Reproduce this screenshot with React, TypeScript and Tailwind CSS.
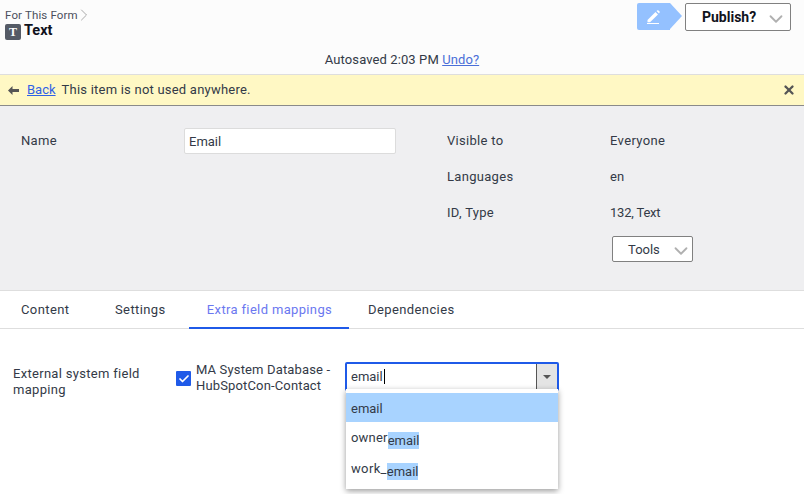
import { Check, ChevronDown, ChevronRight, X } from 'lucide-react'

const FONT = "font-['Roboto',sans-serif]"

function Meta({ label, value, valueClass }: { label: string; value: string; valueClass?: string }) {
  return (
    <div className="flex h-9 items-start">
      <div className="w-[163px] tracking-[0.3px]">{label}</div>
      <div className={valueClass}>{value}</div>
    </div>
  )
}

export default function App() {
  return (
    <div className={`${FONT} h-[494px] w-[804px] overflow-hidden bg-white text-[13px] text-[#333a47]`}>
      {/* Header */}
      <header className="h-[75px] border-b border-[#dedede] bg-[#fcfcfc]">
        <div className="flex h-[52px] justify-between">
          <div className="pl-[5px] pt-[8px]">
            <div className="flex h-[14px] items-center text-[11.5px] leading-[14px] tracking-[0.15px] text-[#4a4f5c]">
              For This Form
              <ChevronRight className="ml-[-4px] text-[#999]" size={20} strokeWidth={1} />
            </div>
            <div className="flex items-start">
              <span className="mr-[3px] mt-[2px] flex h-[16px] w-[16px] items-center justify-center rounded-[2px] bg-[#555b66] font-['Liberation_Serif',serif] text-[12px] font-bold leading-none text-white">
                T
              </span>
              <span className="mt-[1px] text-[14.5px] font-bold leading-[16px] text-[#10131c]">Text</span>
            </div>
          </div>
          <div className="flex items-start pr-[13px] pt-[3px]">
            <div className="relative mr-[3px] flex h-[27px] w-[33px] items-center justify-center rounded-l-[2px] bg-[#94c1ff]">
              <svg width="14" height="14" viewBox="0 0 14 14" className="ml-[1px]">
                <path d="M0.5 10 L8.5 2 L11 4.5 L3 12.2 L0.5 12.2 Z M9.5 1 L10.5 0.3 Q11 0 11.5 0.4 L12.6 1.6 Q13 2 12.6 2.5 L12 3.5 Z" fill="white" />
                <rect x="0" y="13" width="12" height="1" fill="white" />
              </svg>
              <span className="absolute left-[33px] top-0 h-0 w-0 border-y-[13.5px] border-l-[12px] border-y-transparent border-l-[#94c1ff]" />
            </div>
            <button className="relative ml-[12px] flex h-[28px] w-[106px] items-center rounded-[2px] border border-[#808080] bg-white pl-[16px] text-[14px] font-bold text-[#10131c]">
              Publish?
              <ChevronDown className="absolute right-[3px] top-[4px] text-[#b0b0b0]" size={22} strokeWidth={2} />
            </button>
          </div>
        </div>
        <div className="text-center text-[13px] leading-[16px] tracking-[0.1px]">
          Autosaved 2:03 PM <a className="text-[#4a6fd8] underline">Undo?</a>
        </div>
      </header>

      {/* Notice */}
      <div className="flex h-[31px] items-center justify-between border-b border-[#8a8a8a] bg-[#fff8c4] pl-[8px] pr-[8px]">
        <div className="flex items-center">
          <svg width="11" height="9" viewBox="0 0 11 9" className="mr-[8px] text-[#555]">
            <path d="M0 4.5 L4.5 0 L4.5 3 L11 3 L11 6 L4.5 6 L4.5 9 Z" fill="currentColor" />
          </svg>
          <a className="mr-[6px] text-[#2f62e6] underline">Back</a>
          <span className="tracking-[0.22px]">This item is not used anywhere.</span>
        </div>
        <X className="text-[#555]" size={14} strokeWidth={4} />
      </div>

      {/* Details panel */}
      <section className="flex h-[185px] border-b border-[#dedede] bg-[#efeff1] pt-[22px]">
        <div className="flex w-[447px] items-start pl-[21px]">
          <div className="w-[163px] pt-[5px] leading-[16px] tracking-[0.3px]">Name</div>
          <input
            readOnly
            value="Email"
            className="h-[26px] w-[212px] rounded-[2px] border border-[#dcdcdc] bg-white px-[4px] text-[13px] text-[#333a47] outline-none"
          />
        </div>
        <div className="flex flex-col pt-[5px] leading-[16px]">
          <Meta label="Visible to" value="Everyone" valueClass="tracking-[0.35px]" />
          <Meta label="Languages" value="en" />
          <Meta label="ID, Type" value="132, Text" valueClass="tracking-[-0.2px]" />
          <button className="relative ml-[165px] mt-[-5px] flex h-[26px] w-[81px] items-center rounded-[2px] border border-[#808080] bg-white pl-[15px] pt-[1px] text-[13px]">
            Tools
            <ChevronDown className="absolute right-[0px] top-[3px] text-[#b0b0b0]" size={22} strokeWidth={2} />
          </button>
        </div>
      </section>

      {/* Tabs */}
      <nav className="flex h-[38px] border-b border-[#dedede] text-[13px] tracking-[0.4px]">
        <div className="flex w-[94px] items-center pl-[21px]">Content</div>
        <div className="flex w-[95px] items-center pl-[21px]">Settings</div>
        <div className="flex h-[38px] w-[160px] items-center justify-center border-b-2 border-[#1f5ae8] pl-[1px] pt-[2px] tracking-[0.35px] text-[#6b78f0]">
          Extra field mappings
        </div>
        <div className="flex items-center pl-[19px]">Dependencies</div>
      </nav>

      {/* Mapping row */}
      <div className="flex items-start pl-[13px] pt-[33px]">
        <div className="w-[163px] pt-[4px] leading-[16px] tracking-[0.3px]">
          External system field
          <br />
          mapping
        </div>
        <span className="mr-[5px] mt-[9px] flex h-[15px] w-[15px] items-center justify-center rounded-[1px] bg-[#1f5ae8]">
          <Check className="text-white" size={12} strokeWidth={3.5} />
        </span>
        <div className="w-[149px] leading-[16px] tracking-[0.15px]">
          MA System Database - HubSpotCon-Contact
        </div>
        <div className="relative">
          <div className="flex h-[29px] w-[214px] rounded-[2px] border-2 border-[#1f5ae8] bg-white">
            <div className="flex flex-1 items-center pl-[4px] text-[13px]">
              email
              <span className="ml-[1px] h-[15px] w-px bg-black" />
            </div>
            <div className="flex w-[21px] items-center justify-center border-l border-[#555] bg-[#e4e4e4]">
              <span className="h-0 w-0 border-x-[4px] border-t-[4px] border-x-transparent border-t-[#555]" />
            </div>
          </div>
          <ul className="absolute left-[1px] top-[27px] w-[212px] bg-white pb-[5px] pt-[4px] shadow-[0_2px_6px_rgba(0,0,0,0.4)]">
            <li className="flex h-[29px] items-center bg-[#a8d3ff] pl-[5px] pt-[3px]">email</li>
            <li className="flex h-[31px] items-center pl-[5px] pt-[1px] tracking-[0.2px]">
              owner<span className="mt-[4px] bg-[#a8d3ff] leading-[17px] tracking-normal">email</span>
            </li>
            <li className="flex h-[31px] items-center pl-[5px] pt-[1px] tracking-[0.35px]">
              work_<span className="mt-[4px] bg-[#a8d3ff] leading-[17px] tracking-normal">email</span>
            </li>
          </ul>
        </div>
      </div>
    </div>
  )
}
